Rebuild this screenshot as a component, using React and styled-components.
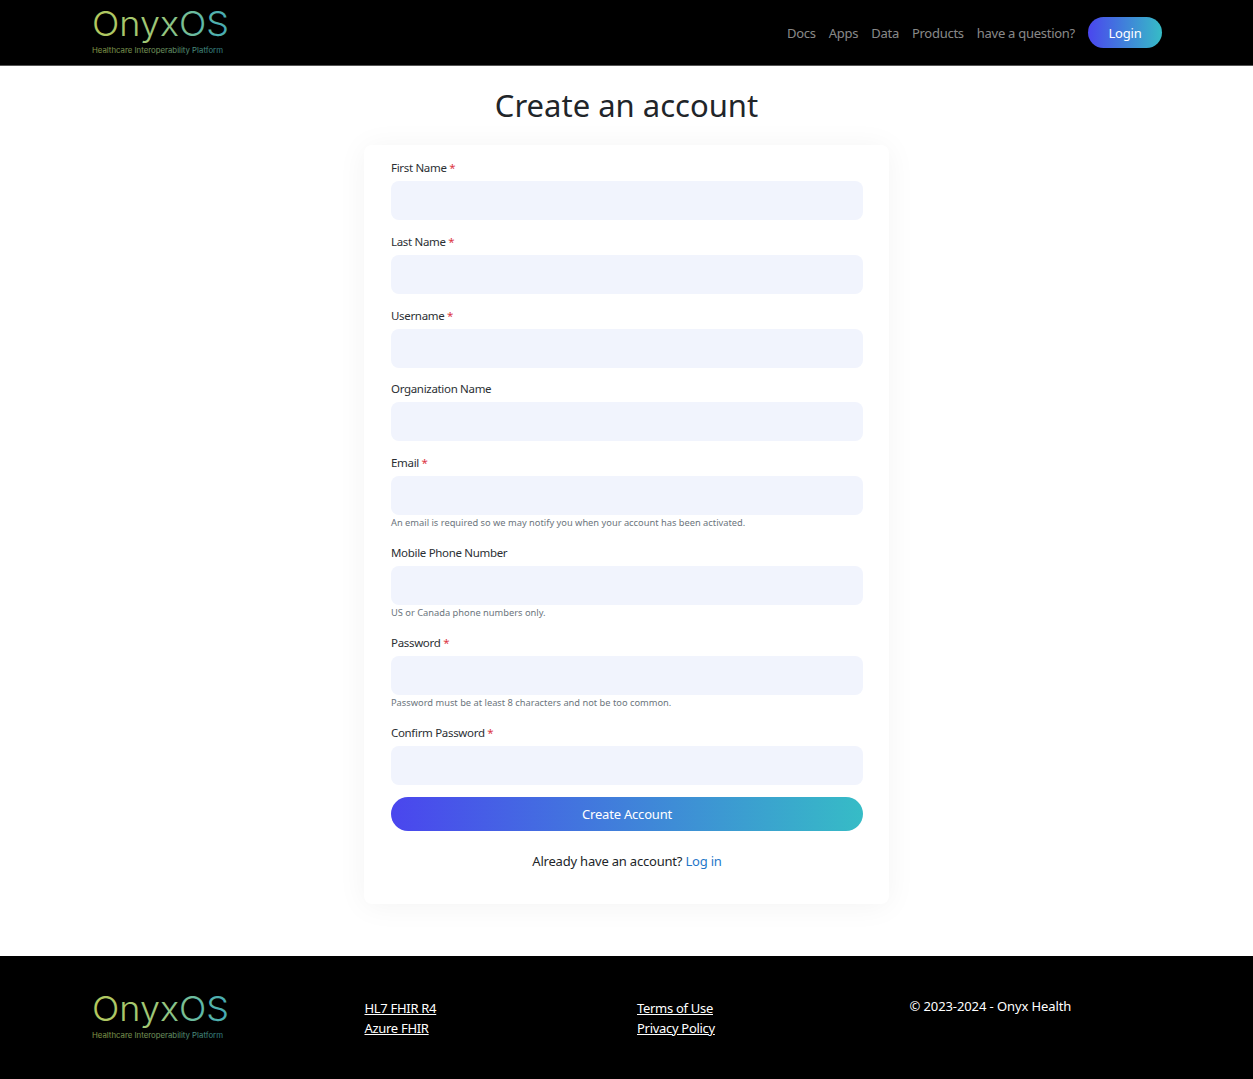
import React from 'react';
import styled, { createGlobalStyle } from 'styled-components';

const Global = createGlobalStyle`
  * { box-sizing: border-box; }
  body {
    margin: 0;
    background: #fff;
    color: #212529;
    font-family: "Noto Sans", "Open Sans", sans-serif;
    font-size: 13px;
    letter-spacing: -0.2px;
  }
`;

const Header = styled.header`
  height: 66px;
  background: #000;
  border-bottom: 1px solid #555;
  padding: 0 91px 0 92px;
  display: flex;
  align-items: center;
  justify-content: space-between;
`;

const LogoSvg = styled.svg`
  display: block;
  width: 140px;
  height: 50px;
  margin-top: ${(p) => p.$top || 0}px;
  letter-spacing: 0;
  overflow: visible;
`;

const Nav = styled.nav`
  display: flex;
  align-items: center;
  gap: 13px;
`;

const NavLink = styled.a`
  color: rgba(255, 255, 255, 0.55);
  text-decoration: none;
  letter-spacing: -0.27px;
`;

const GradientButton = styled.button`
  border: none;
  color: #fff;
  background: linear-gradient(90deg, #4a46ee 0%, #36bcc6 100%);
  font-family: inherit;
  font-size: 13px;
  letter-spacing: -0.2px;
`;

const LoginButton = styled(GradientButton)`
  width: 74px;
  height: 31px;
  border-radius: 16px;
`;

const Main = styled.main`
  height: 890px;
  display: flex;
  flex-direction: column;
  align-items: center;
  padding-top: 18px;
`;

const Title = styled.h1`
  margin: 0 0 19px;
  font-size: 31px;
  font-weight: 400;
  line-height: 42px;
  letter-spacing: 0;
`;

const Card = styled.form`
  width: 525px;
  height: 759px;
  padding: 14px 26px 0 27px;
  background: #fff;
  border-radius: 8px;
  box-shadow: 0 2px 30px rgba(0, 0, 0, 0.05);
`;

const Field = styled.div`
  margin-bottom: 12.8px;
`;

const Label = styled.label`
  display: block;
  font-size: 11.5px;
  line-height: 18px;
  margin-bottom: 4px;
  letter-spacing: -0.32px;
  color: #2b2f33;
`;

const Required = styled.span`
  color: #dc3545;
`;

const Input = styled.input`
  display: block;
  width: 100%;
  height: 39px;
  border: none;
  border-radius: 8px;
  background: #f1f4fd;
`;

const Hint = styled.small`
  display: block;
  margin-top: 1px;
  padding-bottom: 1.3px;
  font-size: 9.3px;
  line-height: 14px;
  letter-spacing: 0;
  color: #6c757d;
`;

const SubmitButton = styled(GradientButton)`
  display: block;
  width: 100%;
  height: 34px;
  margin-top: -1px;
  border-radius: 17px;
`;

const LoginNote = styled.p`
  margin: 20px 0 0;
  text-align: center;
  line-height: 20px;
`;

const LoginLink = styled.a`
  color: #1f77c9;
  text-decoration: none;
`;

const Footer = styled.footer`
  height: 123px;
  background: #000;
  padding: 38px 0 0 92px;
  display: grid;
  grid-template-columns: repeat(4, 272.5px);
  color: #fff;
`;

const FooterLinks = styled.div`
  display: flex;
  flex-direction: column;
  padding-top: 4px;
  line-height: 20px;
  letter-spacing: -0.3px;
`;

const FooterLink = styled.a`
  color: #fff;
  text-decoration: underline;
`;

const Copyright = styled.div`
  padding-top: 2px;
  line-height: 20px;
  letter-spacing: -0.1px;
`;

const Logo = ({ id, top }) => (
  <LogoSvg $top={top} viewBox="0 0 140 50">
    <defs>
      <linearGradient id={id} x1="0" x2="1" y1="0" y2="0">
        <stop offset="0" stopColor="#b4c95c" />
        <stop offset="0.5" stopColor="#9cc77a" />
        <stop offset="0.8" stopColor="#5fb9a8" />
        <stop offset="1" stopColor="#43a9b4" />
      </linearGradient>
    </defs>
    <text x="0" y="27" fontFamily="Inter, sans-serif" fontWeight="300" fontSize="34.5" textLength="137" lengthAdjust="spacingAndGlyphs" fill={`url(#${id})`}>
      OnyxOS
    </text>
    <text x="0" y="44" fontFamily="Inter, sans-serif" fontSize="7.5" textLength="131" lengthAdjust="spacingAndGlyphs" fill={`url(#${id})`} opacity="0.75">
      Healthcare Interoperability Platform
    </text>
  </LogoSvg>
);

const fields = [
  { label: 'First Name', required: true },
  { label: 'Last Name', required: true },
  { label: 'Username', required: true },
  { label: 'Organization Name' },
  { label: 'Email', required: true, hint: 'An email is required so we may notify you when your account has been activated.' },
  { label: 'Mobile Phone Number', hint: 'US or Canada phone numbers only.' },
  { label: 'Password', required: true, type: 'password', hint: 'Password must be at least 8 characters and not be too common.' },
  { label: 'Confirm Password', required: true, type: 'password' },
];

export default function App() {
  return (
    <>
      <Global />
      <Header>
        <Logo id="logo-top" top={3} />
        <Nav>
          <NavLink>Docs</NavLink>
          <NavLink>Apps</NavLink>
          <NavLink>Data</NavLink>
          <NavLink>Products</NavLink>
          <NavLink>have a question?</NavLink>
          <LoginButton type="button">Login</LoginButton>
        </Nav>
      </Header>
      <Main>
        <Title>Create an account</Title>
        <Card>
          {fields.map((f) => (
            <Field key={f.label}>
              <Label>
                {f.label} {f.required && <Required>*</Required>}
              </Label>
              <Input type={f.type || 'text'} />
              {f.hint && <Hint>{f.hint}</Hint>}
            </Field>
          ))}
          <SubmitButton type="button">Create Account</SubmitButton>
          <LoginNote>
            Already have an account? <LoginLink>Log in</LoginLink>
          </LoginNote>
        </Card>
      </Main>
      <Footer>
        <Logo id="logo-bottom" />
        <FooterLinks>
          <FooterLink>HL7 FHIR R4</FooterLink>
          <FooterLink>Azure FHIR</FooterLink>
        </FooterLinks>
        <FooterLinks>
          <FooterLink>Terms of Use</FooterLink>
          <FooterLink>Privacy Policy</FooterLink>
        </FooterLinks>
        <Copyright>© 2023-2024 - Onyx Health</Copyright>
      </Footer>
    </>
  );
}
